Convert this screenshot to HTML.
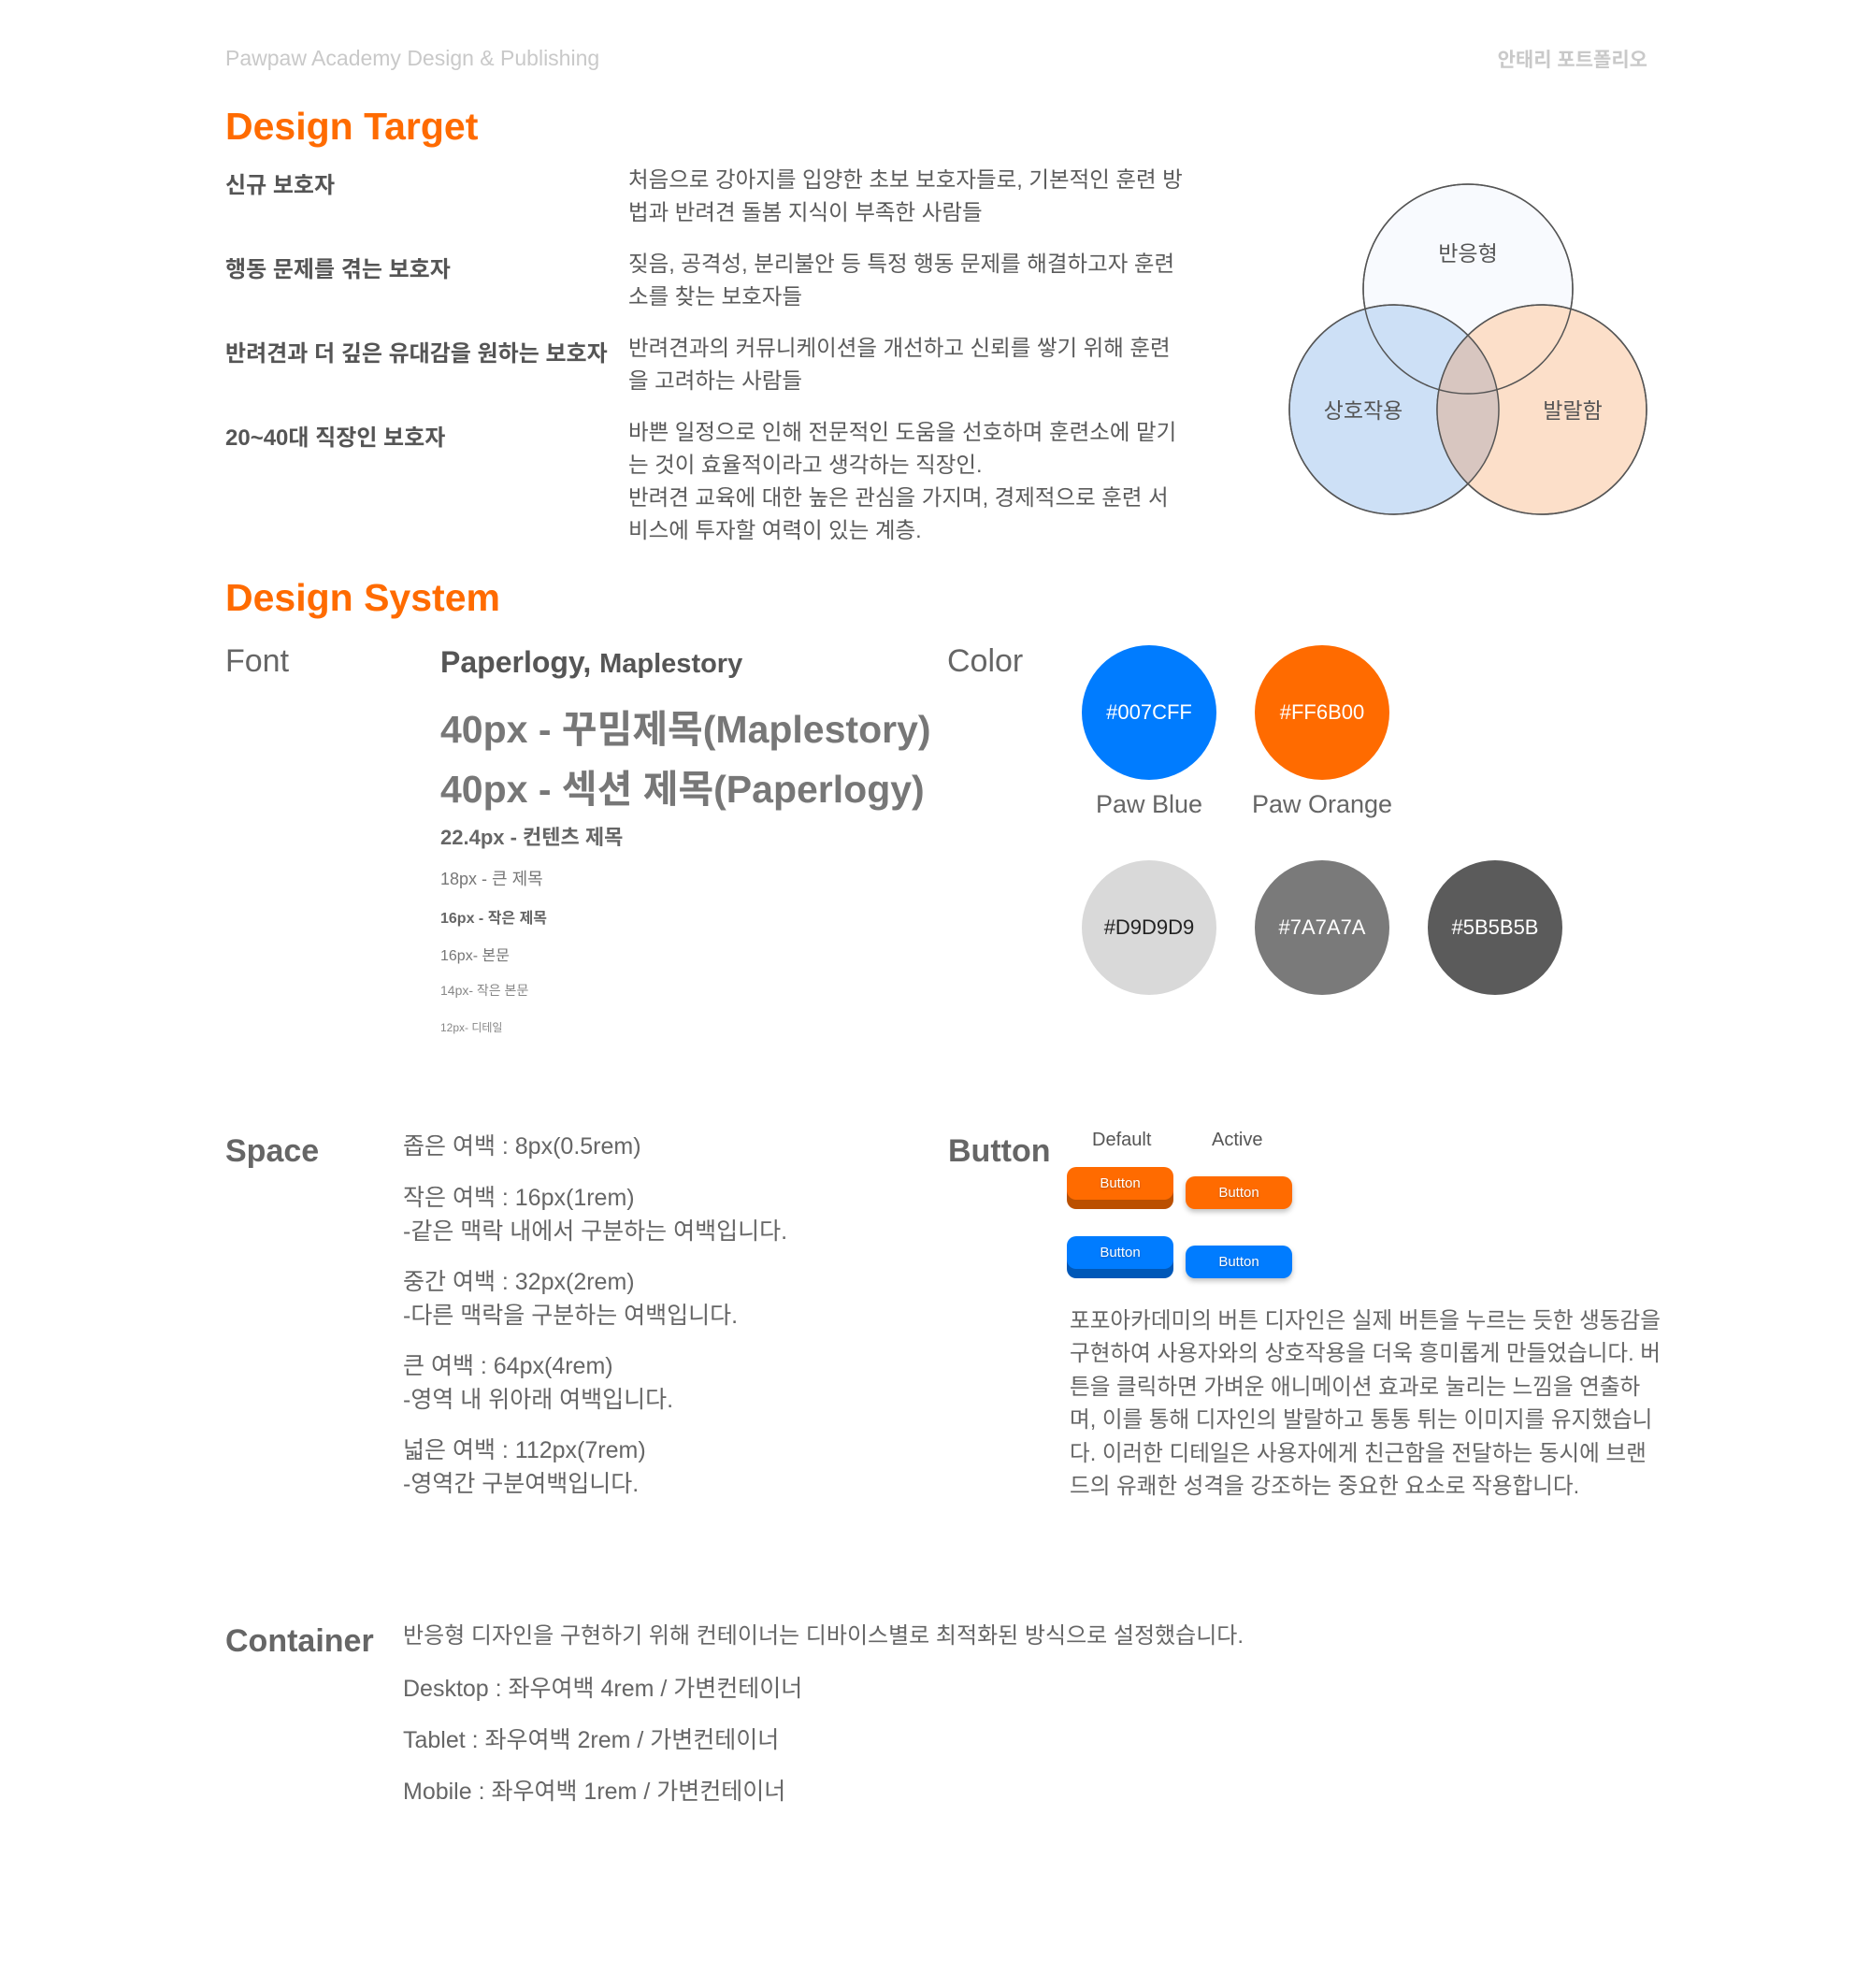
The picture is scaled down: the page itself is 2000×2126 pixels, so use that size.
<!DOCTYPE html>
<html><head><meta charset="utf-8"><style>
*{margin:0;padding:0;box-sizing:border-box}
body{width:2000px;height:2126px;background:#fff;position:relative;font-family:"Liberation Sans","Noto Sans CJK KR",sans-serif;color:#5b5b5b;overflow:hidden}
.a{position:absolute;white-space:nowrap}
.h{color:#ff6b00;font-weight:bold;font-size:41px}
.lb{font-weight:bold;font-size:24px;color:#555}
.ds{font-size:23.5px;line-height:35px;color:#5b5b5b}
.sec{font-size:34px;font-weight:bold;color:#666}
.c{position:absolute;width:144px;height:144px;border-radius:50%;display:flex;align-items:center;justify-content:center;font-size:22px;color:#fff}
.nm{font-size:27px;color:#666;text-align:center;width:200px}
.sp{font-size:25px;color:#666;line-height:36px}
.btn{position:absolute;width:114px;height:35px;border-radius:10px;color:#fff;font-size:15px;display:flex;align-items:center;justify-content:center;text-shadow:0 1px 2px rgba(0,0,0,.3)}
</style></head><body>
<div class="a" style="left:241px;top:49px;font-size:23px;color:#c9c9c9">Pawpaw Academy Design &amp; Publishing</div>
<div class="a" style="right:238px;top:48px;font-size:21px;color:#c9c9c9;font-weight:bold">안태리 포트폴리오</div>

<div class="a h" style="left:241px;top:112px">Design Target</div>
<div class="a lb" style="left:241px;top:178px">신규 보호자</div>
<div class="a ds" style="left:672px;top:175px">처음으로 강아지를 입양한 초보 보호자들로, 기본적인 훈련 방<br>법과 반려견 돌봄 지식이 부족한 사람들</div>
<div class="a lb" style="left:241px;top:268px">행동 문제를 겪는 보호자</div>
<div class="a ds" style="left:672px;top:265px">짖음, 공격성, 분리불안 등 특정 행동 문제를 해결하고자 훈련<br>소를 찾는 보호자들</div>
<div class="a lb" style="left:241px;top:358px">반려견과 더 깊은 유대감을 원하는 보호자</div>
<div class="a ds" style="left:672px;top:355px">반려견과의 커뮤니케이션을 개선하고 신뢰를 쌓기 위해 훈련<br>을 고려하는 사람들</div>
<div class="a lb" style="left:241px;top:448px">20~40대 직장인 보호자</div>
<div class="a ds" style="left:672px;top:445px">바쁜 일정으로 인해 전문적인 도움을 선호하며 훈련소에 맡기<br>는 것이 효율적이라고 생각하는 직장인.<br>반려견 교육에 대한 높은 관심을 가지며, 경제적으로 훈련 서<br>비스에 투자할 여력이 있는 계층.</div>

<svg class="a" style="left:1366px;top:190px" width="410" height="370" viewBox="1370 190 410 370">
<circle cx="1574" cy="309" r="112" fill="#f8fafe" stroke="#555" stroke-width="1.5"/>
<circle cx="1495" cy="438" r="112" fill="#cde0f6" stroke="#555" stroke-width="1.5"/>
<circle cx="1653" cy="438" r="112" fill="#fcdfc9" stroke="#555" stroke-width="1.5"/>
<clipPath id="cl"><circle cx="1495" cy="438" r="112"/></clipPath>
<circle cx="1653" cy="438" r="112" fill="#d8c6c0" clip-path="url(#cl)"/>
<circle cx="1574" cy="309" r="112" fill="none" stroke="#555" stroke-width="1.5"/>
<circle cx="1495" cy="438" r="112" fill="none" stroke="#555" stroke-width="1.5"/>
<circle cx="1653" cy="438" r="112" fill="none" stroke="#555" stroke-width="1.5"/>
<g font-family="Liberation Sans,Noto Sans CJK KR,sans-serif" font-size="23" fill="#555" text-anchor="middle">
<text x="1574" y="279">반응형</text><text x="1462" y="447">상호작용</text><text x="1686" y="447">발랄함</text></g>
</svg>

<div class="a h" style="left:241px;top:616px">Design System</div>
<div class="a sec" style="left:241px;top:688px;font-weight:normal;color:#666">Font</div>
<div class="a" style="left:471px;top:690px;font-size:32px;font-weight:bold;color:#555">Paperlogy, <span style="font-size:29px">Maplestory</span></div>
<div class="a" style="left:471px;top:746px;font-size:41px;font-weight:bold;color:#777">40px - 꾸밈제목(Maplestory)</div>
<div class="a" style="left:471px;top:810px;font-size:41px;font-weight:bold;color:#777">40px - 섹션 제목(Paperlogy)</div>
<div class="a" style="left:471px;top:878px;font-size:22px;font-weight:bold;color:#666">22.4px - 컨텐츠 제목</div>
<div class="a" style="left:471px;top:926px;font-size:18px;color:#777">18px - 큰 제목</div>
<div class="a" style="left:471px;top:968px;font-size:16px;color:#666;font-weight:bold">16px - 작은 제목</div>
<div class="a" style="left:471px;top:1008px;font-size:16px;color:#777">16px- 본문</div>
<div class="a" style="left:471px;top:1049px;font-size:14px;color:#888">14px- 작은 본문</div>
<div class="a" style="left:471px;top:1090px;font-size:12px;color:#888">12px- 디테일</div>

<div class="a sec" style="left:1013px;top:688px;font-weight:normal;color:#666">Color</div>
<div class="c" style="left:1157px;top:690px;background:#007cff">#007CFF</div>
<div class="c" style="left:1342px;top:690px;background:#ff6b00">#FF6B00</div>
<div class="a nm" style="left:1129px;top:845px">Paw Blue</div>
<div class="a nm" style="left:1314px;top:845px">Paw Orange</div>
<div class="c" style="left:1157px;top:920px;background:#d9d9d9;color:#222">#D9D9D9</div>
<div class="c" style="left:1342px;top:920px;background:#7a7a7a">#7A7A7A</div>
<div class="c" style="left:1527px;top:920px;background:#5b5b5b">#5B5B5B</div>

<div class="a sec" style="left:241px;top:1212px">Space</div>
<div class="a sp" style="left:431px;top:1208px">좁은 여백 : 8px(0.5rem)</div>
<div class="a sp" style="left:431px;top:1263px">작은 여백 : 16px(1rem)<br>-같은 맥락 내에서 구분하는 여백입니다.</div>
<div class="a sp" style="left:431px;top:1353px">중간 여백 : 32px(2rem)<br>-다른 맥락을 구분하는 여백입니다.</div>
<div class="a sp" style="left:431px;top:1443px">큰 여백 : 64px(4rem)<br>-영역 내 위아래 여백입니다.</div>
<div class="a sp" style="left:431px;top:1533px">넓은 여백 : 112px(7rem)<br>-영역간 구분여백입니다.</div>

<div class="a sec" style="left:1014px;top:1212px">Button</div>
<div class="a" style="left:1168px;top:1208px;font-size:20px;color:#555">Default</div>
<div class="a" style="left:1296px;top:1208px;font-size:20px;color:#555">Active</div>
<div class="btn" style="left:1141px;top:1248px;background:#ff6b00;box-shadow:0 10px 0 #bb5000">Button</div>
<div class="btn" style="left:1268px;top:1258px;background:#ff6b00;box-shadow:0 3px 6px rgba(0,0,0,.25)">Button</div>
<div class="btn" style="left:1141px;top:1322px;background:#007cff;box-shadow:0 10px 0 #0058b8">Button</div>
<div class="btn" style="left:1268px;top:1332px;background:#007cff;box-shadow:0 3px 6px rgba(0,0,0,.25)">Button</div>
<div class="a" style="left:1144px;top:1396px;font-size:23.6px;line-height:35.4px;color:#666">포포아카데미의 버튼 디자인은 실제 버튼을 누르는 듯한 생동감을<br>구현하여 사용자와의 상호작용을 더욱 흥미롭게 만들었습니다. 버<br>튼을 클릭하면 가벼운 애니메이션 효과로 눌리는 느낌을 연출하<br>며, 이를 통해 디자인의 발랄하고 통통 튀는 이미지를 유지했습니<br>다. 이러한 디테일은 사용자에게 친근함을 전달하는 동시에 브랜<br>드의 유쾌한 성격을 강조하는 중요한 요소로 작용합니다.</div>

<div class="a sec" style="left:241px;top:1736px">Container</div>
<div class="a sp" style="left:431px;top:1732px;font-size:24px">반응형 디자인을 구현하기 위해 컨테이너는 디바이스별로 최적화된 방식으로 설정했습니다.</div>
<div class="a sp" style="left:431px;top:1788px">Desktop : 좌우여백 4rem / 가변컨테이너</div>
<div class="a sp" style="left:431px;top:1843px">Tablet : 좌우여백 2rem / 가변컨테이너</div>
<div class="a sp" style="left:431px;top:1898px">Mobile : 좌우여백 1rem / 가변컨테이너</div>
</body></html>
